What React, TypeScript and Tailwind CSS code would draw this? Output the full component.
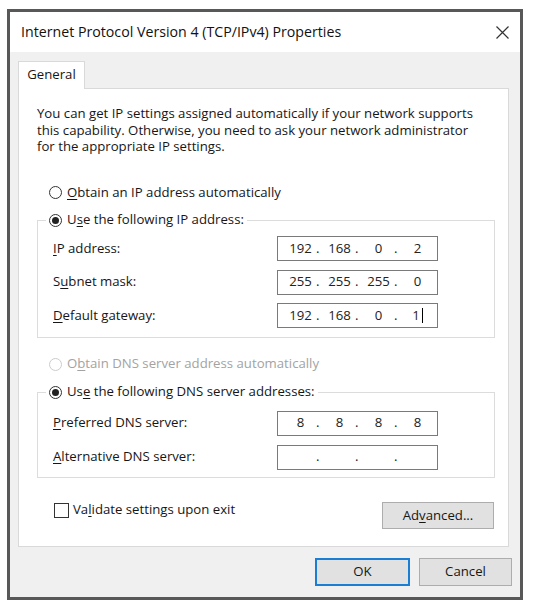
import React from "react";

const font = { fontFamily: '"Open Sans", "Noto Sans", sans-serif' };

function Radio({ checked, disabled }: { checked?: boolean; disabled?: boolean }) {
  return (
    <span
      className={
        "inline-flex w-[13px] h-[13px] shrink-0 items-center justify-center rounded-full border bg-white " +
        (disabled ? "border-[#cccccc]" : "border-[#333333]")
      }
    >
      {checked ? <span className="block w-[7px] h-[7px] rounded-full bg-[#222222]" /> : null}
    </span>
  );
}

function IpBox({ parts, cursor }: { parts: string[]; cursor?: boolean }) {
  return (
    <div className="flex h-[25px] w-[161px] items-center border border-[#7a7a7a] bg-white pl-[7px] text-[#222]">
      {parts.map((p, i) => (
        <React.Fragment key={i}>
          <span className="inline-flex w-[31px] items-center justify-center">
            {p}
            {cursor && i === 3 ? <span className="ml-[2px] inline-block h-[15px] w-px bg-black" /> : null}
          </span>
          {i < 3 ? <span className="w-[8px] text-left">.</span> : null}
        </React.Fragment>
      ))}
    </div>
  );
}

function Row({ label, parts, cursor }: { label: React.ReactNode; parts: string[]; cursor?: boolean }) {
  return (
    <div className="flex h-[25px] items-center">
      <span className="w-[224px]">{label}</span>
      <IpBox parts={parts} cursor={cursor} />
    </div>
  );
}

const U = ({ children }: { children: React.ReactNode }) => (
  <span className="underline underline-offset-[2px]">{children}</span>
);

export default function App() {
  return (
    <div className="h-[607px] w-[537px] bg-white pl-[7px] pt-[9px] text-[13.2px] text-[#161616]" style={font}>
      <div className="flex h-[591px] w-[516px] flex-col border-[3px] border-[#585858]">
        {/* title bar */}
        <div className="flex h-[40px] shrink-0 items-center justify-between bg-white pl-[11px] pr-[11px]">
          <span className="text-[14.2px] text-[#111]">Internet Protocol Version 4 (TCP/IPv4) Properties</span>
          <svg width="13" height="13" viewBox="0 0 13 13">
            <path d="M0.5 0.5 L12.5 12.5 M12.5 0.5 L0.5 12.5" stroke="#333" strokeWidth="1.2" fill="none" />
          </svg>
        </div>
        {/* body */}
        <div className="flex flex-1 flex-col bg-[#f0f0f0] pl-[8px] pt-[9px]">
          <div className="relative z-10 -mb-px flex h-[28px] w-[67px] items-center justify-center border border-b-0 border-[#d9d9d9] bg-white pb-[2px]">
            General
          </div>
          <div className="flex h-[459px] w-[491px] flex-col border border-[#d9d9d9] bg-white">
            <p className="ml-[18px] mt-[16px] whitespace-nowrap leading-[16.5px]">
              You can get IP settings assigned automatically if your network supports
              <br />
              this capability. Otherwise, you need to ask your network administrator
              <br />
              for the appropriate IP settings.
            </p>
            <div className="ml-[30px] mt-[29.5px] flex h-[17px] items-center gap-[5px]">
              <Radio />
              <span>
                <U>O</U>btain an IP address automatically
              </span>
            </div>
            <fieldset className="ml-[18px] mt-[10.5px] w-[458px] border border-[#dcdcdc]">
              <legend className="ml-[8px] px-[3px]">
                <span className="flex h-[17px] items-center gap-[5px]">
                  <Radio checked />
                  <span>
                    U<U>s</U>e the following IP address:
                  </span>
                </span>
              </legend>
              <div className="flex flex-col gap-[8.5px] pb-[8.5px] pl-[15px] pt-[7.5px]">
                <Row label={<><U>I</U>P address:</>} parts={["192", "168", "0", "2"]} />
                <Row label={<>S<U>u</U>bnet mask:</>} parts={["255", "255", "255", "0"]} />
                <Row label={<><U>D</U>efault gateway:</>} parts={["192", "168", "0", "1"]} cursor />
              </div>
            </fieldset>
            <div className="ml-[30px] mt-[18px] flex h-[17px] items-center gap-[5px] text-[#a3a3a3]">
              <Radio disabled />
              <span>
                O<U>b</U>tain DNS server address automatically
              </span>
            </div>
            <fieldset className="ml-[18px] mt-[11px] w-[458px] border border-[#dcdcdc]">
              <legend className="ml-[8px] px-[3px]">
                <span className="flex h-[17px] items-center gap-[5px]">
                  <Radio checked />
                  <span>
                    Us<U>e</U> the following DNS server addresses:
                  </span>
                </span>
              </legend>
              <div className="flex flex-col gap-[9px] pb-[7px] pl-[15px] pt-[10px]">
                <Row label={<><U>P</U>referred DNS server:</>} parts={["8", "8", "8", "8"]} />
                <Row label={<><U>A</U>lternative DNS server:</>} parts={["", "", "", ""]} />
              </div>
            </fieldset>
            <div className="ml-[35px] mr-[14px] mt-[24.5px] flex items-start justify-between">
              <div className="flex h-[16px] items-center gap-[4px]">
                <span className="inline-block h-[15px] w-[15px] border border-[#333] bg-white" />
                <span>
                  Va<U>l</U>idate settings upon exit
                </span>
              </div>
              <div className="flex h-[27px] w-[112px] items-center justify-center border border-[#adadad] bg-[#e1e1e1]">
                Ad<U>v</U>anced...
              </div>
            </div>
          </div>
          <div className="mr-[8px] mt-[11px] flex justify-end gap-[9px]">
            <div className="flex h-[28px] w-[95px] items-center justify-center border-2 border-[#1a7fd4] bg-[#e1e1e1]">
              OK
            </div>
            <div className="flex h-[28px] w-[93px] items-center justify-center border border-[#adadad] bg-[#e1e1e1]">
              Cancel
            </div>
          </div>
        </div>
      </div>
    </div>
  );
}
